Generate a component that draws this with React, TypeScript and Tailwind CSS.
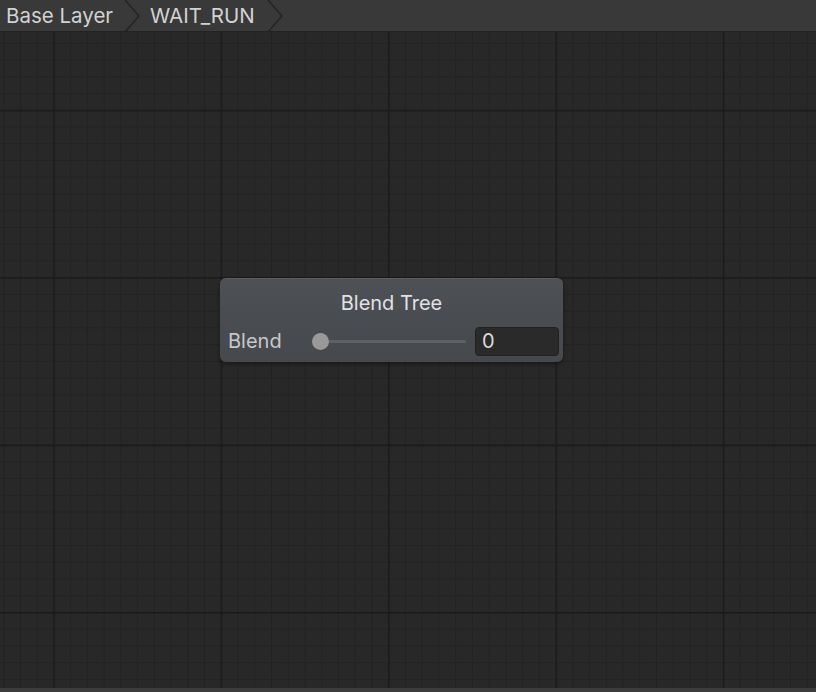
import React from "react";

const Chevron: React.FC = () => (
  <svg width="18" height="32" viewBox="0 0 18 32" className="shrink-0">
    <path d="M1 0 L15 16 L1 32" fill="none" stroke="#232323" strokeWidth="1.5" />
  </svg>
);

const GridBackground: React.FC = () => (
  <svg className="absolute inset-0 h-full w-full" xmlns="http://www.w3.org/2000/svg">
    <defs>
      <pattern id="minor" x="3.2" y="10.8" width="16.74" height="16.74" patternUnits="userSpaceOnUse">
        <path d="M0 0.5 H16.74 M0.5 0 V16.74" fill="none" stroke="#222222" strokeWidth="1" />
      </pattern>
      <pattern id="major" x="53.3" y="77.8" width="167.4" height="167.4" patternUnits="userSpaceOnUse">
        <path d="M0 0.75 H167.4 M0.75 0 V167.4" fill="none" stroke="#1a1a1a" strokeWidth="1.5" />
      </pattern>
    </defs>
    <rect width="100%" height="100%" fill="#282828" />
    <rect width="100%" height="100%" fill="url(#minor)" />
    <rect width="100%" height="100%" fill="url(#major)" />
  </svg>
);

const BlendTreeNode: React.FC = () => (
  <div className="absolute left-[220px] top-[246px] w-[343px] h-[84px] rounded-[6px] bg-[linear-gradient(#4d5055,#45484c)] border-t border-[#5a5d62] shadow-[0_2px_4px_rgba(0,0,0,0.4)] flex flex-col">
    <div className="h-[46px] flex items-center justify-center pt-[2px] text-[20px] text-[#e2e2e2]">
      Blend Tree
    </div>
    <div className="flex items-center pl-[8px] pr-[4px] pt-[1px]">
      <span className="w-[84px] text-[20px] text-[#c8c8c8]">Blend</span>
      <div className="relative flex-1 h-[16px] flex items-center mr-[9px]">
        <div className="h-[3px] w-full bg-[#5f6165] rounded-full" />
        <div className="absolute left-0 w-[17px] h-[17px] rounded-full bg-[#999999]" />
      </div>
      <div className="w-[84px] h-[29px] rounded-[4px] bg-[#2a2a2a] border border-[#212121] flex items-center pl-[6px] text-[20px] text-[#dadada]">
        0
      </div>
    </div>
  </div>
);

const App: React.FC = () => {
  return (
    <div className="w-[816px] h-[692px] flex flex-col bg-[#282828] overflow-hidden font-['Inter','Noto_Sans',sans-serif]">
      <div className="h-[32px] shrink-0 flex items-center bg-[#393939] border-b border-[#222222]">
        <span className="pl-[6px] pr-[11px] pt-[2px] text-[20.5px] text-[#d2d2d2] leading-none">Base Layer</span>
        <Chevron />
        <span className="pl-[8px] pr-[12px] pt-[2px] text-[20.5px] text-[#d2d2d2] leading-none">WAIT_RUN</span>
        <Chevron />
      </div>
      <div className="relative flex-1">
        <GridBackground />
        <BlendTreeNode />
      </div>
      <div className="h-[4px] shrink-0 bg-[#3c3c3c]" />
    </div>
  );
};

export default App;
